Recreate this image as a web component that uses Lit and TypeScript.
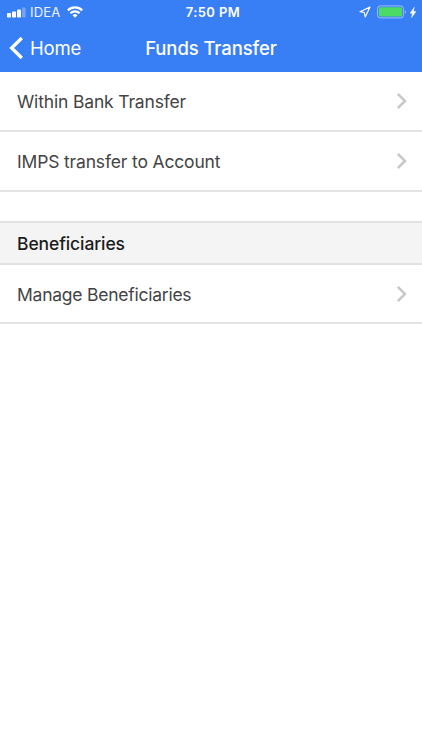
import { LitElement, html, css } from "lit";
import { customElement, property } from "lit/decorators.js";

@customElement("status-bar")
class StatusBar extends LitElement {
  static styles = css`
    :host { display: grid; grid-template-columns: 1fr auto 1fr; align-items: center; height: 24px; padding: 0 6px 0 7px; color: #fff; box-sizing: border-box; }
    .side { display: flex; align-items: center; }
    .right { justify-content: flex-end; }
    .carrier { font-size: 13px; line-height: 24px; margin: 0 7px 0 4px; letter-spacing: 0.15px; opacity: 0.93; }
    .time { font-size: 13px; line-height: 24px; font-weight: 600; letter-spacing: 0.4px; padding-left: 3px; }
    svg { display: block; }
    .arrow { margin-right: 6px; }
    .battery { margin-right: 3px; }
  `;

  render() {
    return html`
      <div class="side">
        <svg width="19" height="11" viewBox="0 0 19 11" fill="#fff">
          <rect x="0" y="6" width="4" height="4.500" rx="0.8" />
          <rect x="5" y="4.500" width="4" height="6" rx="0.8" />
          <rect x="10" y="2.500" width="4" height="8" rx="0.8" />
          <rect x="15" y="0.500" width="3.600" height="10" rx="0.8" opacity="0.3" />
        </svg>
        <span class="carrier">IDEA</span>
        <svg width="16" height="12" viewBox="0 0 16 12" fill="none" stroke="#fff" stroke-width="2.200">
          <path d="M0.800 4.400a10.300 10.300 0 0 1 14.400 0" />
          <path d="M3.400 7.300a6.500 6.500 0 0 1 9.200 0" />
          <path d="M8 11.700l-2.500-2.500a3.600 3.600 0 0 1 5 0z" fill="#fff" stroke="none" />
        </svg>
      </div>
      <span class="time">7:50 PM</span>
      <div class="side right">
        <svg class="arrow" width="12" height="12" viewBox="0 0 12 12" fill="none" stroke="#fff" stroke-width="1.200" stroke-linejoin="round">
          <path d="M11 1L1 5.700L5.300 6.500L6.200 11Z" />
        </svg>
        <svg class="battery" width="30" height="14" viewBox="0 0 30 14">
          <rect x="0.600" y="0.900" width="25.800" height="12" rx="2.600" fill="none" stroke="#fff" stroke-opacity="0.5" stroke-width="1" />
          <rect x="2" y="2.300" width="23" height="9.200" rx="1" fill="#4cd964" />
          <path d="M27.800 5v4a2.300 2.300 0 0 0 0-4z" fill="#fff" opacity="0.5" />
        </svg>
        <svg width="6" height="11" viewBox="0 0 6 11" fill="#fff" stroke="#fff" stroke-width="0.400">
          <path d="M4.300 0.300L0 6.200H2.400L1.500 10.700L6 4.500H3.400Z" />
        </svg>
      </div>
    `;
  }
}

@customElement("list-row")
class ListRow extends LitElement {
  @property() label = "";

  static styles = css`
    :host { display: flex; align-items: center; justify-content: space-between; box-sizing: border-box; padding: 0 15px 0 17px; border-bottom: 2px solid #e4e4e4; background: #fff; color: #444; }
    .label { font-size: 17.5px; line-height: 24px; letter-spacing: var(--tracking, -0.16px); white-space: nowrap; padding-top: 2px; }
    .last-label { padding-top: 0; }
    svg { display: block; }
  `;

  render() {
    return html`
      <span class="label">${this.label}</span>
      <svg width="11" height="18" viewBox="0 0 11 18" fill="none" stroke="#c8c8c8" stroke-width="2.500">
        <path d="M1.800 1.800L9 9L1.800 16.200" />
      </svg>
    `;
  }
}

@customElement("app-root")
class AppRoot extends LitElement {
  static styles = css`
    :host { display: flex; flex-direction: column; height: 750px; background: #fff; font-family: Inter, "Liberation Sans", sans-serif; }
    .header { height: 72px; background: #387ef5; color: #fff; }
    .nav { height: 48px; display: grid; grid-template-columns: 1fr auto 1fr; align-items: center; padding: 0 9px 0 9px; }
    .back { display: flex; align-items: center; gap: 6px; font-size: 18.5px; line-height: 24px; letter-spacing: -0.15px; }
    .back svg { display: block; }
    .title { font-size: 18.5px; line-height: 24px; font-weight: 500; letter-spacing: -0.1px; }
    .row { height: 60px; flex: none; }
    .row.last { height: 59px; --tracking: -0.24px; }
    .divider { box-sizing: border-box; flex: none; height: 44px; margin-top: 29px; padding-left: 17px; border-top: 2px solid #e1e1e1; border-bottom: 2px solid #e1e1e1; background: #f4f4f4; color: #1c1c1c; font-size: 17.5px; font-weight: 500; line-height: 42px; letter-spacing: -0.1px; }
  `;

  render() {
    return html`
      <header class="header">
        <status-bar></status-bar>
        <div class="nav">
          <div class="back">
            <svg width="15" height="24" viewBox="0 0 15 24" fill="none" stroke="#fff" stroke-width="3.300">
              <path d="M12.800 2L2.600 12L12.800 22" />
            </svg>
            <span>Home</span>
          </div>
          <span class="title">Funds Transfer</span>
        </div>
      </header>
      <list-row class="row" label="Within Bank Transfer"></list-row>
      <list-row class="row" label="IMPS transfer to Account"></list-row>
      <div class="divider">Beneficiaries</div>
      <list-row class="row last" label="Manage Beneficiaries"></list-row>
    `;
  }
}
